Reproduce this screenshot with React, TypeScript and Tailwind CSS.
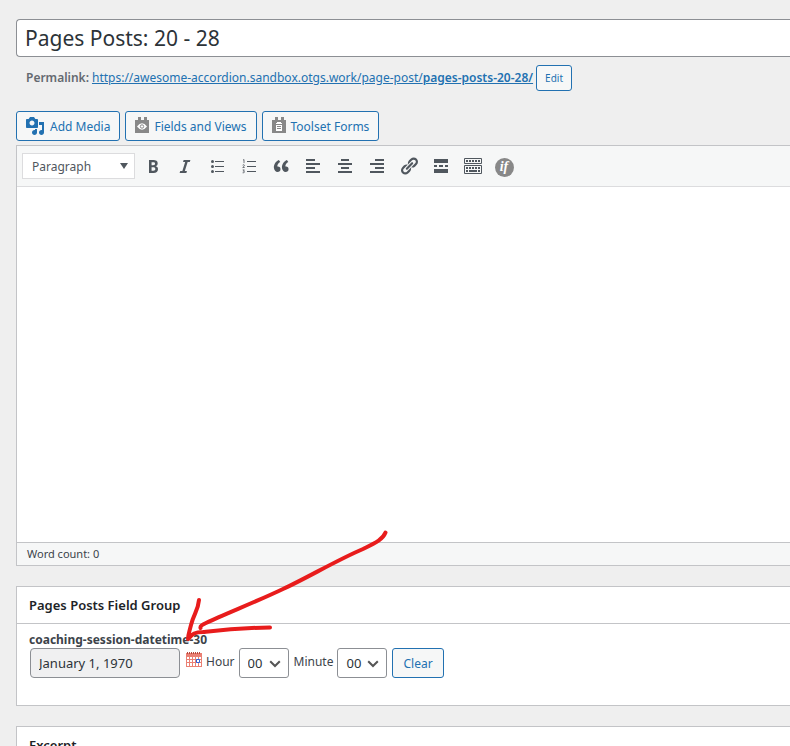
import { useState } from 'react';
import type { ReactNode } from 'react';

const PERMALINK_BASE = 'https://awesome-accordion.sandbox.otgs.work/page-post/';

const HOURS = Array.from({ length: 24 }, (_, i) => String(i).padStart(2, '0'));
const MINUTES = Array.from({ length: 60 }, (_, i) => String(i).padStart(2, '0'));

function Icon({ children, className = 'h-5 w-5' }: { children: ReactNode; className?: string }) {
  return (
    <svg viewBox="0 0 20 20" fill="currentColor" aria-hidden="true" className={className}>
      {children}
    </svg>
  );
}

const TOOLS: { label: string; icon: ReactNode }[] = [
  {
    label: 'Bold',
    icon: (
      <path d="M6 4v13h4.54c1.37 0 2.46-.33 3.26-1 .8-.66 1.2-1.58 1.2-2.77 0-.84-.17-1.51-.51-2.01s-.9-.85-1.67-1.03v-.09c.57-.1 1.02-.4 1.36-.9s.51-1.13.51-1.91c0-1.14-.39-1.98-1.17-2.5C12.75 4.26 11.5 4 9.78 4H6zm2.57 5.15V6.26h1.36c.73 0 1.27.11 1.61.32.34.22.51.58.51 1.07 0 .54-.16.92-.47 1.15s-.82.35-1.51.35h-1.5zm0 2.19h1.6c1.44 0 2.16.53 2.16 1.61 0 .6-.17 1.05-.51 1.34s-.86.43-1.57.43H8.57v-3.38z" />
    ),
  },
  { label: 'Italic', icon: <path d="M14.78 6h-2.13l-2.8 9h2.12l-.62 2H4.6l.62-2h2.14l2.8-9H8.03l.62-2h6.75z" /> },
  {
    label: 'Bulleted list',
    icon: (
      <>
        <circle cx="5.5" cy="5.5" r="1.5" />
        <circle cx="5.5" cy="10.5" r="1.5" />
        <circle cx="5.5" cy="15.5" r="1.5" />
        <path d="M8 5h9v1H8zM8 10h9v1H8zM8 15h9v1H8z" />
      </>
    ),
  },
  {
    label: 'Numbered list',
    icon: (
      <>
        <path d="M8 5h9v1H8zM8 10h9v1H8zM8 15h9v1H8z" />
        <path
          d="M4 4.2l1-.7v3.6M3.6 9.2q1.9-1.1 1.9.2 0 .7-1.8 2.1h2M3.7 13.9h1.6l-.9 1.3q1.2 0 1.1.9-.2 1-1.9.7"
          fill="none"
          stroke="currentColor"
          strokeWidth="0.8"
        />
      </>
    ),
  },
  {
    label: 'Blockquote',
    icon: (
      <path d="M9.49 13.22c0-.74-.2-1.38-.61-1.9-.62-.78-1.83-.88-2.53-.72-.29-1.65 1.11-3.75 2.92-4.65L7.88 4c-2.73 1.3-5.42 4.28-4.96 8.05C3.21 14.43 4.59 16 6.54 16c.85 0 1.56-.25 2.12-.75s.83-1.18.83-2.03zm8.05 0c0-.74-.2-1.38-.61-1.9-.63-.78-1.83-.88-2.53-.72-.29-1.65 1.11-3.75 2.92-4.65L15.93 4c-2.73 1.3-5.41 4.28-4.95 8.05.29 2.38 1.66 3.95 3.61 3.95.85 0 1.56-.25 2.12-.75s.83-1.18.83-2.03z" />
    ),
  },
  { label: 'Align left', icon: <path d="M12 5V3H3v2h9zm5 4V7H3v2h14zm-5 4v-2H3v2h9zm5 4v-2H3v2h14z" /> },
  { label: 'Align center', icon: <path d="M14 5V3H6v2h8zm3 4V7H3v2h14zm-3 4v-2H6v2h8zm3 4v-2H3v2h14z" /> },
  { label: 'Align right', icon: <path d="M17 5V3H8v2h9zm0 4V7H3v2h14zm0 4v-2H8v2h9zm0 4v-2H3v2h14z" /> },
  {
    label: 'Insert link',
    icon: (
      <path d="M17.74 2.76c1.68 1.69 1.68 4.41 0 6.1l-1.53 1.52c-1.12 1.12-2.7 1.47-4.14 1.09l2.62-2.61.76-.77.76-.76c.84-.84.84-2.2 0-3.04-.84-.85-2.2-.85-3.04 0l-.77.76-3.38 3.38c-.37-1.44-.02-3.02 1.1-4.14l1.52-1.53c1.69-1.68 4.42-1.68 6.1 0zM8.59 13.43l5.34-5.34c.42-.42.42-1.1 0-1.52-.44-.43-1.13-.39-1.53 0l-5.33 5.34c-.42.42-.42 1.1 0 1.52.44.43 1.13.39 1.52 0zm-.76 2.29l4.14-4.15c.38 1.44.03 3.02-1.09 4.14l-1.52 1.53c-1.69 1.68-4.41 1.68-6.1 0-1.68-1.68-1.68-4.42 0-6.1l1.53-1.52c1.12-1.12 2.7-1.47 4.14-1.1l-4.14 4.15c-.85.84-.85 2.2 0 3.05.84.84 2.2.84 3.04 0z" />
    ),
  },
  {
    label: 'Read more tag',
    icon: <path d="M3 3h14v4H3zM3 9h3v2H3zM8 9h4v2H8zM14 9h3v2h-3zM3 13h14v4H3z" />,
  },
  {
    label: 'Toolbar toggle',
    icon: (
      <>
        <path d="M1.5 2.5h17v5h-17zM1.5 9.5h17v8h-17z" fill="none" stroke="currentColor" />
        <path d="M3 4h2v2H3zM6 4h2v2H6zM9 4h2v2H9zM12 4h2v2h-2zM15 4h2v2h-2zM3 11h2v2H3zM6 11h2v2H6zM9 11h2v2H9zM12 11h2v2h-2zM15 11h2v2h-2zM3 14h2v2H3zM6 14h8v2H6zM15 14h2v2h-2z" />
      </>
    ),
  },
];

function ToolsetClip({ children }: { children: ReactNode }) {
  return (
    <svg viewBox="0 0 14 16" aria-hidden="true" className="mb-[2px] ml-px h-4 w-[14px] text-[#888]">
      <path d="M0 3h3V0h3v3h3V0h3v3h2v13H0z" fill="currentColor" />
      {children}
    </svg>
  );
}

function MediaButton({ icon, children }: { icon: ReactNode; children: ReactNode }) {
  return (
    <button
      type="button"
      className="flex h-[30px] items-center gap-[5px] rounded-[3px] border border-[#2271b1] bg-[#f6f7f7] pr-[9px] pl-2 whitespace-nowrap text-[#2271b1]"
    >
      {icon}
      <span className="pt-[2px]">{children}</span>
    </button>
  );
}

function TimeSelect({ id, label, options }: { id: string; label: string; options: string[] }) {
  return (
    <>
      <label htmlFor={id} className="mr-1 mb-[2px] text-[#3c434a]">
        {label}
      </label>
      <div className="relative mr-[5px]">
        <select
          id={id}
          className="h-[30px] w-[50px] appearance-none rounded-[3px] border border-[#8c8f94] bg-white pl-2 text-[13px] text-[#2c3338]"
        >
          {options.map((value) => (
            <option key={value}>{value}</option>
          ))}
        </select>
        <svg
          viewBox="0 0 12 8"
          aria-hidden="true"
          className="pointer-events-none absolute top-3 right-2 h-2 w-3 text-[#555]"
        >
          <path d="M1.2 1.2L6 6l4.8-4.8" fill="none" stroke="currentColor" strokeWidth="2" />
        </svg>
      </div>
    </>
  );
}

function CalendarIcon() {
  return (
    <svg viewBox="0 0 16 15" aria-hidden="true" className="h-[15px] w-4">
      <path d="M0 1h16v14H0z" fill="#ea8074" />
      <path
        d="M1 5h2v2H1zM4 5h2v2H4zM7 5h2v2H7zM10 5h2v2h-2zM13 5h2v2h-2zM1 8h2v2H1zM4 8h2v2H4zM7 8h2v2H7zM13 8h2v2h-2zM1 11h2v3H1zM4 11h2v3H4zM7 11h2v3H7zM10 11h2v3h-2zM13 11h2v3h-2z"
        fill="#fff"
      />
      <path d="M1.5 0v2M3.5 0v2M5.5 0v2M7.5 0v2M9.5 0v2M11.5 0v2M13.5 0v2" stroke="#b5483c" />
      <path d="M10.500 7.500h3v3h-3z" fill="#fff" stroke="#2f62d9" />
    </svg>
  );
}

function Arrow() {
  return (
    <svg
      viewBox="184 528 206 116"
      aria-hidden="true"
      className="pointer-events-none absolute -top-[59px] left-[167px] h-[116px] w-[206px]"
    >
      <g fill="none" stroke="#e81c1c" strokeWidth="4" strokeLinecap="round" strokeLinejoin="round">
        <path d="M385.5 532.5C383 539 377 542 363 549C337 560 307 578 283 589C258 601 225 614 206 623C202 625 200 626 200.5 628" />
        <path d="M199 600C198 611 194 613 191 625C189 633 188 635 188 639C192 635 193 632 203 632C220 630 235 628 270 627.5" />
      </g>
    </svg>
  );
}

export default function App() {
  const [title, setTitle] = useState('Pages Posts: 20 - 28');
  const [date, setDate] = useState('January 1, 1970');

  return (
    <main className="min-h-screen overflow-x-hidden bg-[#efefef] pt-[19px] pl-4 font-['Noto_Sans',sans-serif] text-[12px] leading-4 text-[#3c434a]">
      <input
        aria-label="Title"
        value={title}
        onChange={(e) => setTitle(e.target.value)}
        className="block h-[38px] w-full rounded-l-[4px] border border-r-0 border-[#8c8f94] bg-white px-2 text-[21px] text-[#2c3338]"
      />

      <div className="mt-2 flex h-[26px] items-center gap-[3px] pl-[10px] whitespace-nowrap">
        <span className="font-semibold text-[#646970]">Permalink:</span>
        <a href={`${PERMALINK_BASE}pages-posts-20-28/`} className="text-[#2271b1] underline">
          {PERMALINK_BASE}
          <span className="font-semibold">pages-posts-20-28/</span>
        </a>
        <button
          type="button"
          className="h-[26px] rounded-[3px] border border-[#2271b1] bg-[#f6f7f7] px-2 text-[10px] text-[#2271b1]"
        >
          Edit
        </button>
      </div>

      <div className="mt-5 flex gap-[5px]">
        <MediaButton
          icon={
            <Icon>
              <path d="M13 11V4c0-.55-.45-1-1-1h-1.67L9 1H5L3.67 3H2c-.55 0-1 .45-1 1v7c0 .55.45 1 1 1h10c.55 0 1-.45 1-1zM7 4.5c1.38 0 2.5 1.12 2.5 2.5S8.38 9.5 7 9.5 4.5 8.38 4.5 7 5.62 4.5 7 4.5zM14 6h5v10.5c0 1.38-1.12 2.5-2.5 2.5S14 17.88 14 16.5s1.12-2.5 2.5-2.5c.17 0 .34.02.5.05V9h-3V6zm-4 8.05V13h2v3.5c0 1.38-1.12 2.5-2.5 2.5S7 17.88 7 16.5 8.12 14 9.5 14c.17 0 .34.02.5.05z" />
            </Icon>
          }
        >
          Add Media
        </MediaButton>
        <MediaButton
          icon={
            <ToolsetClip>
              <path d="M2 9.500q5-6.500 10 0q-5 6.500-10 0z" fill="#fff" />
              <circle cx="7" cy="9.500" r="1.700" fill="none" stroke="#888" />
            </ToolsetClip>
          }
        >
          Fields and Views
        </MediaButton>
        <MediaButton
          icon={
            <ToolsetClip>
              <path d="M5 5h4v1h1v8H4V6h1z" fill="#fff" />
              <path d="M4 7.500h6M5 9.500h4M5 11.500h4" stroke="#888" />
            </ToolsetClip>
          }
        >
          Toolset Forms
        </MediaButton>
      </div>

      <section className="mt-1 border border-r-0 border-[#c3c4c7] bg-white">
        <div className="flex h-[41px] items-center border-b border-[#dcdcde] bg-[#f6f7f7] pl-[5px] text-[#50575e]">
          <div className="relative mr-2">
            <select
              aria-label="Block format"
              className="block h-[26px] w-[113px] appearance-none border border-[#dcdcde] bg-white pt-px pl-[9px] text-[12px]"
            >
              <option>Paragraph</option>
              <option>Heading 1</option>
              <option>Heading 2</option>
              <option>Preformatted</option>
            </select>
            <svg
              viewBox="0 0 8 6"
              aria-hidden="true"
              className="pointer-events-none absolute top-[10px] right-[7px] h-[6px] w-2"
            >
              <path d="M0 0h8L4 6z" fill="currentColor" />
            </svg>
          </div>
          <div className="flex gap-3">
            {TOOLS.map((tool) => (
              <button key={tool.label} type="button" aria-label={tool.label} title={tool.label}>
                <Icon>{tool.icon}</Icon>
              </button>
            ))}
            <button
              type="button"
              title="Conditional output"
              className="mt-[2px] h-[19px] w-[19px] rounded-full bg-[#888] pr-px font-['Liberation_Serif',serif] text-[14px] leading-4 font-bold text-white italic"
            >
              if
            </button>
          </div>
        </div>
        <textarea aria-label="Content" className="block h-[355px] w-full resize-none bg-white p-3 outline-none" />
        <div className="border-t border-[#c3c4c7] bg-[#f6f7f7] py-1 pl-[10px] text-[11px] leading-[14px]">
          Word count: 0
        </div>
      </section>

      <section className="relative mt-5 border border-r-0 border-[#c3c4c7] bg-white">
        <h2 className="border-b border-[#c3c4c7] px-3 py-[10px] text-[13px] leading-4 font-semibold text-[#1d2327]">
          Pages Posts Field Group
        </h2>
        <div className="px-3 pt-2 pb-[27px]">
          <label htmlFor="session-date" className="block font-bold">
            coaching-session-datetime-30
          </label>
          <div className="flex items-center pl-px">
            <input
              id="session-date"
              readOnly
              value={date}
              className="mr-[6px] h-[30px] w-[150px] rounded-[4px] border border-[#8c8f94] bg-[#f0f0f1] px-2 text-[13px] text-[#2c3338]"
            />
            <button type="button" aria-label="Select date" className="mr-1 mb-2">
              <CalendarIcon />
            </button>
            <TimeSelect id="hour" label="Hour" options={HOURS} />
            <TimeSelect id="minute" label="Minute" options={MINUTES} />
            <button
              type="button"
              onClick={() => setDate('')}
              className="h-[30px] rounded-[3px] border border-[#2271b1] bg-[#f6f7f7] px-[10px] pt-px text-[#2271b1]"
            >
              Clear
            </button>
          </div>
        </div>
        <Arrow />
      </section>

      <section className="mt-5 border border-r-0 border-[#c3c4c7] bg-white">
        <h2 className="border-b border-[#c3c4c7] px-3 py-[10px] text-[13px] leading-4 font-semibold text-[#1d2327]">
          Excerpt
        </h2>
      </section>
    </main>
  );
}
